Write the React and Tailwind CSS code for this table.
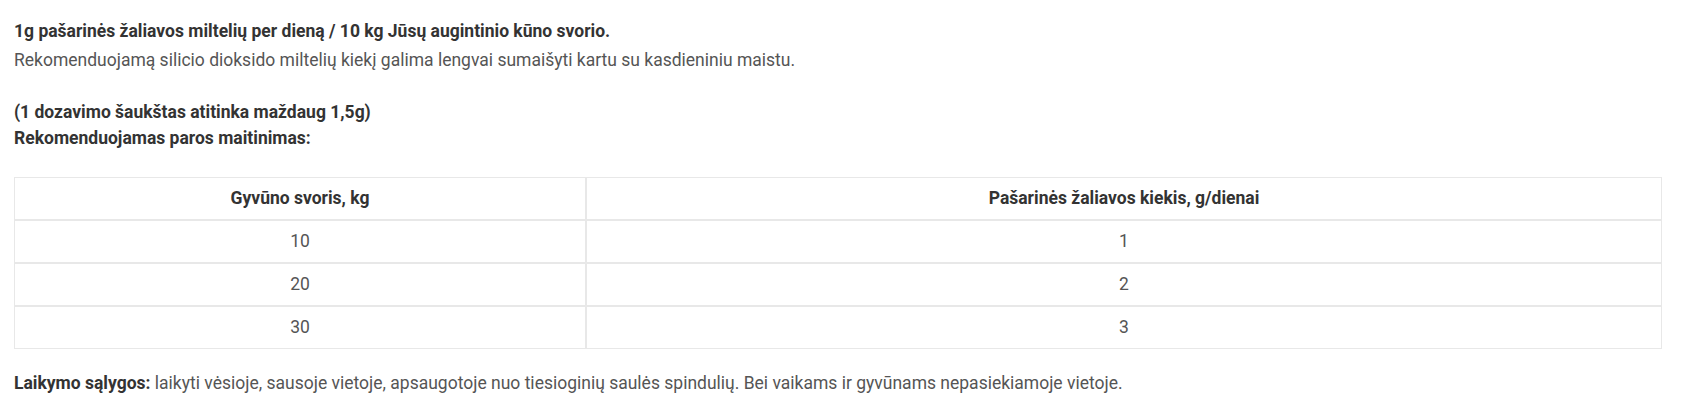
const rows = [
  ["10", "1"],
  ["20", "2"],
  ["30", "3"],
];

const cell = "border border-[#e8e8e8] px-3 py-2 text-center leading-[25px]";

export default function App() {
  return (
    <div className="bg-white px-[14px] pt-[18px] pb-6 font-['Roboto',sans-serif] text-[17.5px] text-[#555]">
      <p className="font-bold leading-[26px] text-[#333]">
        1g pašarinės žaliavos miltelių per dieną / 10 kg Jūsų augintinio kūno svorio.
      </p>
      <p className="mt-[3px] leading-[26px]">
        Rekomenduojamą silicio dioksido miltelių kiekį galima lengvai sumaišyti kartu su kasdieniniu maistu.
      </p>
      <p className="mt-[26px] font-bold leading-[26px] text-[#333]">
        (1 dozavimo šaukštas atitinka maždaug 1,5g)
        <br />
        Rekomenduojamas paros maitinimas:
      </p>

      <table className="mt-[26px] w-[1648px] border-separate border-spacing-0">
        <thead>
          <tr>
            <th className={cell + " w-[572px] font-bold text-[#333]"}>Gyvūno svoris, kg</th>
            <th className={cell + " font-bold text-[#333]"}>Pašarinės žaliavos kiekis, g/dienai</th>
          </tr>
        </thead>
        <tbody>
          {rows.map(([kg, g]) => (
            <tr key={kg}>
              <td className={cell}>{kg}</td>
              <td className={cell}>{g}</td>
            </tr>
          ))}
        </tbody>
      </table>

      <p className="mt-[21px] leading-[26px]">
        <strong className="font-bold text-[#333]">Laikymo sąlygos:</strong> laikyti vėsioje, sausoje vietoje,
        apsaugotoje nuo tiesioginių saulės spindulių. Bei vaikams ir gyvūnams nepasiekiamoje vietoje.
      </p>
    </div>
  );
}
